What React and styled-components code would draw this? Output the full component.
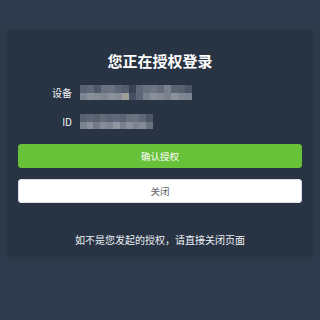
import React from 'react';
import styled, { createGlobalStyle } from 'styled-components';

const GlobalStyle = createGlobalStyle`
    html, body {
        margin: 0;
        padding: 0;
        background: #2f3b4d;
        font-family: "Noto Sans CJK SC", "Noto Sans", sans-serif;
    }
`;

const Page = styled.div`
    width: 320px;
    height: 320px;
    padding: 30px 7px 0;
    box-sizing: border-box;
`;

const Card = styled.div`
    display: flex;
    flex-direction: column;
    padding: 21px 11px 9px;
    background: #283343;
    box-shadow: 0 1px 4px rgba(0, 0, 0, 0.15);
    border-radius: 2px;
`;

const Title = styled.h1`
    margin: 0;
    font-size: 15px;
    line-height: 20px;
    font-weight: 700;
    color: #ffffff;
    text-align: center;
`;

const InfoRow = styled.div`
    display: flex;
    align-items: center;
    gap: 8px;
    margin-top: ${p => p.$gap}px;
`;

const Label = styled.span`
    width: 54px;
    text-align: right;
    font-size: 10px;
    line-height: 15px;
    color: #f2f5f8;
`;

const Mosaic = styled.div`
    display: grid;
    grid-template-columns: repeat(${p => p.$cols}, ${p => p.$size}px);
    grid-auto-rows: 7.5px;
`;

const Cell = styled.span`
    background: ${p => p.$tone};
`;

const Button = styled.button`
    display: block;
    width: 100%;
    height: 24px;
    margin-top: ${p => p.$gap}px;
    padding: 0;
    border-radius: 3px;
    font-family: inherit;
    font-size: 9.5px;
    border: 1px solid ${p => (p.$primary ? '#67c23a' : '#dcdfe6')};
    background: ${p => (p.$primary ? '#67c23a' : '#ffffff')};
    color: ${p => (p.$primary ? '#ffffff' : '#606266')};
`;

const Note = styled.p`
    margin: 30px 0 0;
    font-size: 10px;
    line-height: 14px;
    color: #eef2f6;
    text-align: center;
`;

// blurred values, top row then bottom row
const deviceCells = [
    '#586171', '#5f6878', '#4e5767', '#697181', '#6a7282', '#5b6474', '#545d6d', '#374253',
    '#5e6777', '#697282', '#6e7684', '#646c7c', '#79808d', '#5b6474', '#56606f', '#4c5566',
    '#7d8491', '#8a909b', '#858c97', '#7f8692', '#8b919b', '#878d97', '#a19e98', '#465062',
    '#5d6676', '#7b828f', '#8a909b', '#848b96', '#7a818e', '#8d939d', '#808793', '#7c8390',
];

const idCells = [
    '#566070', '#5e6777', '#59626f', '#646c7b', '#5c6575', '#606979', '#5a6372', '#68707f', '#6c7482', '#5f6878', '#4c5667',
    '#7a818e', '#8b919c', '#747b88', '#858c97', '#7f8692', '#9197a0', '#7a818d', '#8a909b', '#7d8490', '#858b96', '#6a7281',
];

function App() {
    return (
        <Page>
            <GlobalStyle />
            <Card>
                <Title>您正在授权登录</Title>

                <InfoRow $gap={14}>
                    <Label>设备</Label>
                    <Mosaic $cols={16} $size={7}>
                        {deviceCells.map((c, i) => <Cell key={i} $tone={c} />)}
                    </Mosaic>
                </InfoRow>

                <InfoRow $gap={14}>
                    <Label>ID</Label>
                    <Mosaic $cols={11} $size={6.6}>
                        {idCells.map((c, i) => <Cell key={i} $tone={c} />)}
                    </Mosaic>
                </InfoRow>

                <Button $primary $gap={15}>确认授权</Button>
                <Button $gap={11}>关闭</Button>

                <Note>如不是您发起的授权，请直接关闭页面</Note>
            </Card>
        </Page>
    );
}

export default App;
